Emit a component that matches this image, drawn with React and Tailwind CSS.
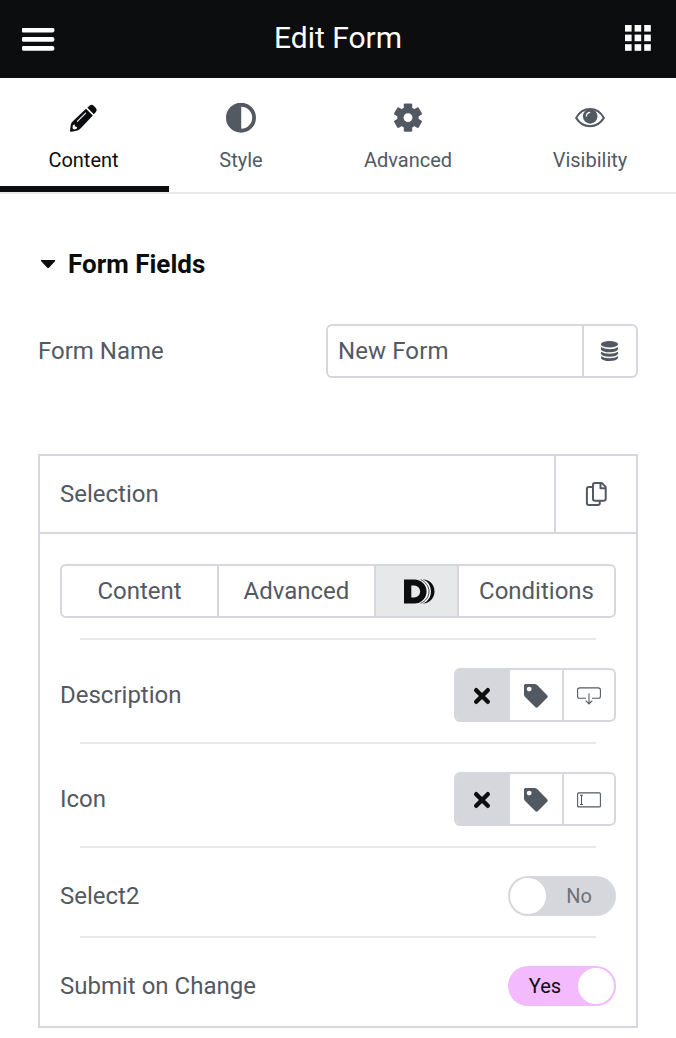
import React from "react";

function PencilIcon() {
  return (
    <svg width="30" height="30" viewBox="0.6 0 30 30" fill="currentColor">
      <path d="M17.6 5.8 24.4 12.6 12.4 25.2 Q11 26.8 9.2 27.4 L3.2 28.7 Q1.5 28.9 1.6 27.2 L2.5 21.3 Q2.9 19.8 4.2 18.5 Z" />
      <path d="M19 4.8 21.1 2.8 Q23.2 .9 25.5 2.9 L27.5 4.9 Q29.3 7 27.5 9 L25.4 11.2 Z" />
      <path d="M9 18.3 17.2 10.2" stroke="#fff" strokeWidth="1.1" strokeLinecap="round" />
      <path d="M4.5 22.2 6.2 21.5 6.8 23.5 8.9 24.2 8 26 5.5 26.5 4.1 25.2Z" fill="#fff" />
    </svg>
  );
}

function ContrastIcon() {
  return (
    <svg width="30" height="30" viewBox="0 0.3 30 30" fill="currentColor">
      <path fillRule="evenodd" d="M15 0a15 15 0 1 1 0 30a15 15 0 1 1 0-30ZM15.2 4v22a11 11 0 0 0 0-22Z" />
    </svg>
  );
}

function GearIcon() {
  return (
    <svg width="30" height="30" viewBox="-15 -14.6 30 30" fill="currentColor">
      <g>
        <rect x="-4.2" y="-14.2" width="8.4" height="28.4" rx="1.2" />
        <rect x="-4.2" y="-14.2" width="8.4" height="28.4" rx="1.2" transform="rotate(60)" />
        <rect x="-4.2" y="-14.2" width="8.4" height="28.4" rx="1.2" transform="rotate(120)" />
        <circle r="10.7" />
      </g>
      <circle r="4.4" fill="#fff" />
    </svg>
  );
}

function EyeIcon() {
  return (
    <svg width="30" height="30" viewBox="0 0.3 30 30">
      <path d="M1.1 15.2C4.5 9.3 9.3 6.4 15 6.4S25.5 9.3 28.9 15.2C25.5 20.7 20.7 23.5 15 23.5S4.5 20.7 1.1 15.2Z" fill="none" stroke="currentColor" strokeWidth="2" strokeLinejoin="round" />
      <circle cx="15.2" cy="13.7" r="7.3" fill="currentColor" />
      <path d="M11.3 13.4Q11.5 10.3 14.7 9.7" fill="none" stroke="#fff" strokeWidth="1.2" strokeLinecap="round" />
    </svg>
  );
}

function DatabaseIcon() {
  return (
    <svg width="18" height="21" viewBox="0.5 0.3 18 21" fill="currentColor">
      <ellipse cx="9" cy="3.6" rx="8.6" ry="3.2" />
      <path d="M.4 6.3Q3.4 8.5 9 8.5T17.6 6.3V8.6Q16.2 11.6 9 11.6T.4 8.6Z" />
      <path d="M.4 11Q3.4 13.1 9 13.1T17.6 11V13.1Q16.2 16 9 16T.4 13.1Z" />
      <path d="M.4 15.5Q3.4 17.5 9 17.5T17.6 15.5V17.4Q16.2 20.4 9 20.4T.4 17.4Z" />
    </svg>
  );
}

function CopyIcon() {
  return (
    <svg width="22" height="24" viewBox="-0.9 0 22 24" fill="none" stroke="currentColor" strokeWidth="2" strokeLinejoin="round">
      <path d="M9 1H15.9L19.8 4.9V17Q19.8 18.8 18 18.8H9Q7.1 18.8 7.1 17V2.8Q7.1 1 9 1Z" />
      <path d="M14.6 1V6.2H19.8" />
      <path d="M7 5.1H2.9Q1 5.1 1 7V21.1Q1 23 2.9 23H12Q13.9 23 13.9 21.1V19" />
    </svg>
  );
}

function DLogo() {
  return (
    <svg width="31" height="25" viewBox="0 0 31 25" fill="#0c0d0e">
      <path d="M16.2 .4A12.4 12.1 0 0 1 16.2 24.6Z" fill="#fff" />
      <path d="M18.6 .3C26 .8 30.5 6 30.5 12.5S26 24.2 18.6 24.7C24 22.6 26.9 18 26.9 12.5S24 2.4 18.6 .3Z" />
      <path d="M16.6 .6C22 3 25 7.6 25 12.5S22 22 16.6 24.4" fill="none" stroke="#0c0d0e" strokeWidth=".8" />
      <path fillRule="evenodd" d="M0 .4H10.5A12.1 12.1 0 0 1 10.5 24.6H0ZM7.3 6.5V18.4H10.2A5.95 5.95 0 0 0 10.2 6.5Z" />
    </svg>
  );
}

function CrossIcon() {
  return (
    <svg width="18" height="18" viewBox="0 0 18 18" stroke="#0c0d0e" strokeWidth="4.4" strokeLinecap="round">
      <path d="M3.2 3.2 14.8 14.8M14.8 3.2 3.2 14.8" />
    </svg>
  );
}

function TagIcon() {
  return (
    <svg width="26" height="26" viewBox="0 0 26 26" fill="currentColor">
      <path fillRule="evenodd" d="M2.6 1H11.4Q13 1 14.1 2.1L24.2 12.2Q25.5 13.5 24.2 14.8L15 24.1Q13.6 25.4 12.2 24.1L2.1 14Q1 12.9 1 11.3V2.6Q1 1 2.6 1ZM6.2 3.7a2.4 2.4 0 1 0 0 4.8a2.4 2.4 0 1 0 0-4.8Z" />
    </svg>
  );
}

function ButtonArrowIcon() {
  return (
    <svg width="24" height="18" viewBox="0 0 24 18" fill="none" stroke="currentColor" strokeWidth="1.1">
      <path d="M9 11.3H2.7Q.6 11.3 .6 9.2V3Q.6 .9 2.7 .9H21.3Q23.4 .9 23.4 3V9.2Q23.4 11.3 21.3 11.3H15" />
      <path d="M12 6.5V16.5M8.7 13.6 12 16.9 15.3 13.6" />
    </svg>
  );
}

function TextInputIcon() {
  return (
    <svg width="24" height="16" viewBox="0 0 24 16" fill="none" stroke="currentColor" strokeWidth="1.1">
      <rect x=".6" y=".9" width="22.8" height="14" rx="1" />
      <path d="M3 3.3H6M4.5 3.3V12.5M3 12.5H6" />
    </svg>
  );
}

function Tab({ icon, label, className }) {
  return (
    <div className={"flex h-[114px] flex-col items-center pt-[25px] text-[20px] leading-[24px] " + className}>
      {icon}
      <span className="mt-[15px]">{label}</span>
    </div>
  );
}

function Separator() {
  return <div className="mx-5 h-[2px] shrink-0 bg-[#e7e8e9]" />;
}

function ChoiceRow({ label, icon }) {
  return (
    <div className="flex h-[102px] items-center justify-between pt-[8px]">
      <span className="pb-[1px]">{label}</span>
      <div className="flex h-[54px] w-[162px] overflow-hidden rounded-[6px] border-2 border-[#d6d7dc]">
        <div className="flex w-[54px] items-center justify-center bg-[#d6d7dc] pt-[2px] pr-[2px]"><CrossIcon /></div>
        <div className="flex w-[52px] items-center justify-center pt-[2px]"><TagIcon /></div>
        <div className="flex flex-1 items-center justify-center border-l-2 border-[#d6d7dc] pt-[2px]">{icon}</div>
      </div>
    </div>
  );
}

export default function App() {
  return (
    <div className="flex h-[1038px] w-[676px] flex-col bg-white font-[Roboto,sans-serif] text-[24px] leading-[28px] text-[#535962]">
      <header className="flex h-[78px] shrink-0 items-center justify-between bg-[#0c0d0e] pr-[25px] pl-[22px] text-white">
        <svg width="33" height="23" viewBox="0.4 0.2 33 23" fill="white">
          <rect x="0" y="0" width="32.8" height="4.8" rx="2" />
          <rect x="0" y="9.1" width="32.8" height="4.8" rx="2" />
          <rect x="0" y="18.1" width="32.8" height="4.8" rx="2" />
        </svg>
        <h1 className="pr-[4px] pb-[2px] text-[30px] leading-[36px]">Edit Form</h1>
        <svg width="26" height="26" viewBox="0 0 26 26" fill="white" className="mb-[2px]">
          {[0, 9.6, 19.2].map((y) =>
            [0, 9.6, 19.2].map((x) => <rect key={x + "-" + y} x={x} y={y} width="6.6" height="6.6" />)
          )}
        </svg>
      </header>

      <nav className="flex h-[116px] shrink-0 border-b-2 border-[#e7e8e9]">
        <Tab icon={<PencilIcon />} label="Content" className="w-[169px] border-b-6 border-[#0c0d0e] pr-[2px] text-[#0c0d0e]" />
        <Tab icon={<ContrastIcon />} label="Style" className="w-[144px]" />
        <Tab icon={<GearIcon />} label="Advanced" className="w-[190px]" />
        <Tab icon={<EyeIcon />} label="Visibility" className="w-[173px] pl-[1px]" />
      </nav>

      <section className="flex flex-col px-[38px] pt-[54px]">
        <div className="flex h-8 items-center gap-[12px] pl-[2px]">
          <svg width="16" height="10" viewBox="0 0 16 10" fill="#0c0d0e">
            <path d="M1.6 1H14.6Q15.8 1 15 2.2L9.2 8.4Q8.1 9.6 7 8.4L1.2 2.2Q.4 1 1.6 1Z" />
          </svg>
          <h2 className="text-[26px] font-bold text-[#0c0d0e]">Form Fields</h2>
        </div>

        <div className="mt-[44px] flex h-[54px] items-center justify-between">
          <span>Form Name</span>
          <div className="flex h-[54px] w-[312px] rounded-[6px] border-2 border-[#d6d7dc]">
            <div className="flex flex-1 items-center pl-[10px] tracking-[0.1px]">New Form</div>
            <div className="flex w-[54px] items-center justify-center border-l-2 border-[#d6d7dc]"><DatabaseIcon /></div>
          </div>
        </div>

        <div className="mt-[76px] flex h-[574px] flex-col border-2 border-[#d6d7dc]">
          <div className="flex h-[78px] shrink-0 border-b-2 border-[#d6d7dc]">
            <div className="flex flex-1 items-center pl-[20px]">Selection</div>
            <div className="flex w-[82px] items-center justify-center border-l-2 border-[#d6d7dc]"><CopyIcon /></div>
          </div>
          <div className="flex flex-col px-[20px] pt-[30px]">
            <div className="mb-5 flex h-[54px] overflow-hidden rounded-[6px] border-2 border-[#d6d7dc]">
              <div className="flex w-[155px] items-center justify-center">Content</div>
              <div className="flex w-[157px] items-center justify-center border-l-2 border-[#d6d7dc]">Advanced</div>
              <div className="flex w-[83px] items-center justify-center border-l-2 border-[#d6d7dc] bg-[#e7e8ea] pl-[6px]"><DLogo /></div>
              <div className="flex flex-1 items-center justify-center border-l-2 border-[#d6d7dc]">Conditions</div>
            </div>
            <Separator />
            <ChoiceRow label="Description" icon={<ButtonArrowIcon />} />
            <Separator />
            <ChoiceRow label="Icon" icon={<TextInputIcon />} />
            <Separator />
            <div className="flex h-[88px] items-center justify-between pt-[8px]">
              <span>Select2</span>
              <div className="flex h-10 w-[108px] items-center rounded-full bg-[#d6d7dc] p-[2px] text-[20px] text-[#6b727b]">
                <div className="size-9 rounded-full bg-white" />
                <span className="flex-1 pr-[2px] text-center">No</span>
              </div>
            </div>
            <Separator />
            <div className="flex h-[88px] items-center justify-between pt-[8px]">
              <span>Submit on Change</span>
              <div className="flex h-10 w-[108px] items-center rounded-full bg-[#f3bafd] p-[2px] text-[20px] text-[#0c0d0e]">
                <span className="flex-1 pl-[2px] text-center">Yes</span>
                <div className="size-9 rounded-full bg-white" />
              </div>
            </div>
          </div>
        </div>
      </section>
    </div>
  );
}
